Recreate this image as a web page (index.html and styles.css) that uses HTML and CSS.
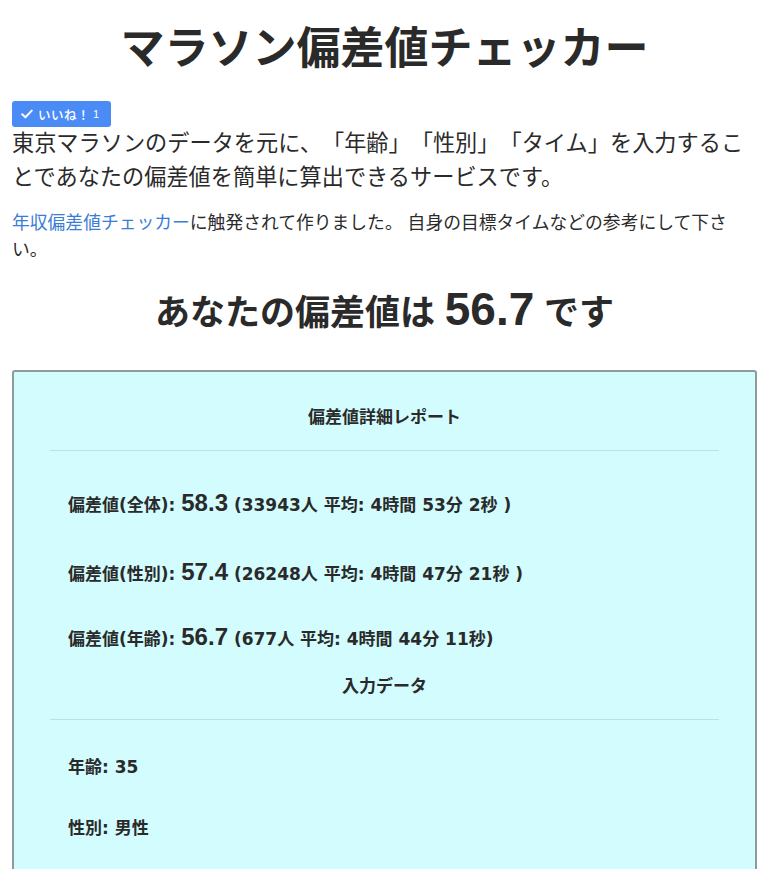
FILE: index.html
```html
<!DOCTYPE html>
<html lang="ja">
<head>
<meta charset="utf-8">
<title>マラソン偏差値チェッカー</title>
<link rel="stylesheet" href="styles.css">
</head>
<body>
<div class="page">
  <h1 class="title">マラソン偏差値チェッカー</h1>
  <div class="like-row">
    <span class="like">
      <svg class="check" viewBox="0 0 12 10" width="12" height="10"><path d="M1.2 5.2 L4.4 8.2 L10.8 1.6" fill="none" stroke="#fff" stroke-width="2" stroke-linecap="round" stroke-linejoin="round"/></svg>
      <span class="like-text">いいね！</span><span class="like-count">1</span>
    </span>
  </div>
  <p class="lead">東京マラソンのデータを元に、「年齢」「性別」「タイム」を入力することであなたの偏差値を簡単に算出できるサービスです。</p>
  <p class="note"><a class="link" href="#">年収偏差値チェッカー</a>に触発されて作りました。 自身の目標タイムなどの参考にして下さい。</p>
  <h2 class="result">あなたの偏差値は <span class="result-num">56.7</span> です</h2>
  <div class="card">
    <div class="card-title">偏差値詳細レポート</div>
    <div class="rule"></div>
    <div class="row row-first">偏差値(全体): <span class="num">58.3</span> (33943人 平均: 4時間 53分 2秒 )</div>
    <div class="row row-mid">偏差値(性別): <span class="num">57.4</span> (26248人 平均: 4時間 47分 21秒 )</div>
    <div class="row row-last">偏差値(年齢): <span class="num">56.7</span> (677人 平均: 4時間 44分 11秒)</div>
    <div class="card-title title-second">入力データ</div>
    <div class="rule"></div>
    <div class="row row-input">年齢: 35</div>
    <div class="row row-input2">性別: 男性</div>
  </div>
</div>
</body>
</html>
```
FILE: styles.css
```css
html, body {
  margin: 0;
  padding: 0;
  background: #ffffff;
}
body {
  font-family: "Liberation Sans", "Noto Sans CJK JP", sans-serif;
  color: #2b2b2b;
  text-spacing-trim: space-all;
}
.page {
  padding: 0 12px;
}
.title {
  margin: 0;
  padding-top: 21px;
  font-size: 44px;
  line-height: 56px;
  font-weight: 700;
  text-align: center;
  color: #2a2a2a;
}
.like-row {
  display: flex;
  margin-top: 24px;
}
.like {
  display: inline-flex;
  align-items: center;
  height: 26px;
  width: 99px;
  box-sizing: border-box;
  padding-left: 9px;
  background: #4a8bf5;
  border-radius: 3px;
  color: #fff;
}
.check {
  margin-right: 5px;
}
.like-text {
  font-size: 12.5px;
  font-weight: 500;
  letter-spacing: 0.5px;
}
.like-count {
  font-size: 11px;
  margin-left: 3px;
}
.lead {
  margin: 0;
  font-size: 22.2px;
  line-height: 34px;
  color: #2a2a2a;
}
.note {
  margin: 15px 0 0;
  font-size: 17.8px;
  line-height: 27px;
  color: #2a2a2a;
}
.link {
  color: #3a7dd6;
  text-decoration: none;
}
.result {
  margin: 20px 0 0;
  font-size: 35px;
  line-height: 50px;
  font-weight: 700;
  text-align: center;
  color: #2a2a2a;
}
.result-num {
  font-size: 46px;
}
.card {
  margin-top: 32px;
  border: 2px solid #8f9b9b;
  border-radius: 3px;
  background: #d2fcfd;
  padding-top: 34px;
  padding-bottom: 60px;
}
.card-title {
  font-size: 17px;
  line-height: 24px;
  font-weight: 700;
  text-align: center;
  color: #2a2a2a;
}
.title-second {
  margin-top: 21px;
}
.rule {
  height: 1px;
  margin: 20px 36px 0;
  background: #b8e2e4;
}
.row {
  padding-left: 54px;
  font-family: "DejaVu Sans", "Noto Sans CJK JP", sans-serif;
  font-size: 17px;
  line-height: 30px;
  font-weight: 700;
  color: #2a2a2a;
}
.num {
  font-family: "Liberation Sans", "Noto Sans CJK JP", sans-serif;
  font-size: 24px;
}
.row-first {
  margin-top: 37px;
}
.row-mid {
  margin-top: 37px;
}
.row-last {
  margin-top: 33px;
}
.row-input {
  margin-top: 32px;
}
.row-input2 {
  margin-top: 31px;
}
```
